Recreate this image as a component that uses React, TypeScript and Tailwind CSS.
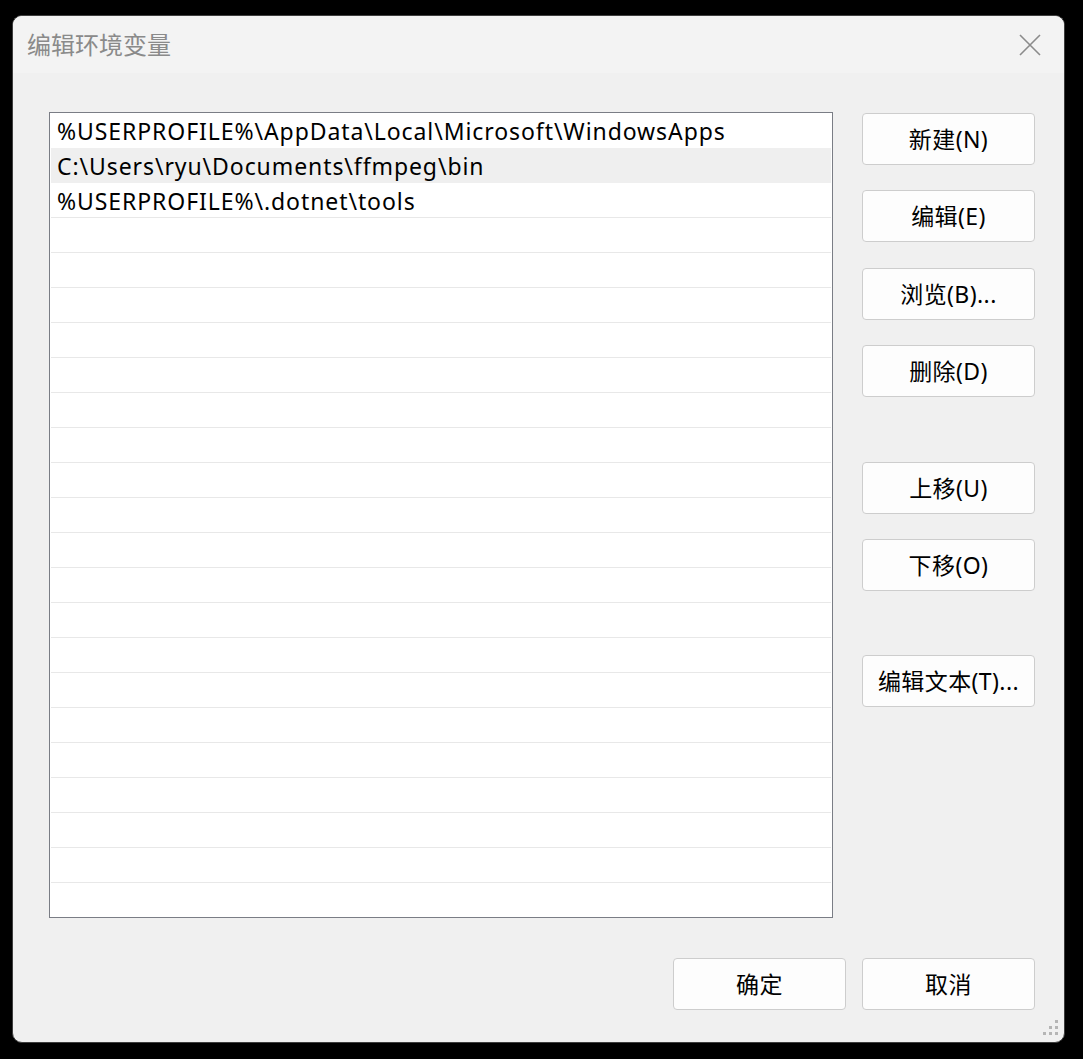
import React from 'react';

const paths = [
  '%USERPROFILE%\\AppData\\Local\\Microsoft\\WindowsApps',
  'C:\\Users\\ryu\\Documents\\ffmpeg\\bin',
  '%USERPROFILE%\\.dotnet\\tools',
];

const ROWS = 23;

function Btn({ label, className = '' }: { label: string; className?: string }) {
  return (
    <button
      className={`h-[52px] w-[173px] rounded-[4px] border border-[#cdcdcd] bg-[#fdfdfd] text-[23px] tracking-[0.4px] text-black ${className}`}
    >
      {label}
    </button>
  );
}

export default function App() {
  const rows = Array.from({ length: ROWS }, (_, i) => paths[i] ?? '');

  return (
    <div
      className="h-[1059px] w-[1083px] bg-black pl-[12px] pt-[15px]"
      style={{ fontFamily: '"Noto Sans", "Noto Sans CJK SC", sans-serif' }}
    >
      <div className="relative flex h-[1028px] w-[1053px] flex-col overflow-hidden rounded-[10px] border border-[#3e3e3e] bg-[#f0f0f0]">
        {/* title bar */}
        <div className="flex h-[57px] items-center justify-between bg-[#f3f3f3] pl-[14px] pr-[23px]">
          <span className="text-[24px] text-[#8a8a8a]">编辑环境变量</span>
          <svg width="22" height="22" viewBox="0 0 22 22" className="mt-[1px]">
            <path d="M1 1 L21 21 M21 1 L1 21" stroke="#8b8b8b" strokeWidth="1.6" fill="none" />
          </svg>
        </div>

        {/* body */}
        <div className="flex flex-1 flex-col pl-[36px] pr-[28px] pt-[39px]">
          <div className="flex gap-[29px]">
            <div className="h-[806px] w-[784px] overflow-hidden border border-[#7a7d85] bg-white px-[1px]">
              {rows.map((p, i) => (
                <div
                  key={i}
                  className={`flex h-[35px] items-center border-b border-[#e8e8e8] pl-[6px] pt-[3px] text-[23px] leading-none tracking-[0.92px] text-black ${
                    i === 1 ? 'bg-[#efefef] border-[#efefef]' : ''
                  } ${i === 0 ? 'border-white' : ''}`}
                >
                  {p}
                </div>
              ))}
            </div>

            <div className="mt-[1px] flex flex-col">
              <Btn label="新建(N)" />
              <Btn label="编辑(E)" className="mt-[25px]" />
              <Btn label="浏览(B)..." className="mt-[26px]" />
              <Btn label="删除(D)" className="mt-[25px]" />
              <Btn label="上移(U)" className="mt-[65px]" />
              <Btn label="下移(O)" className="mt-[25px]" />
              <Btn label="编辑文本(T)..." className="mt-[64px]" />
            </div>
          </div>

          <div className="mr-[1px] mt-[40px] flex justify-end gap-[16px]">
            <Btn label="确定" />
            <Btn label="取消" />
          </div>
        </div>

        {/* resize grip */}
        <svg width="16" height="16" viewBox="0 0 16 16" className="absolute bottom-[6px] right-[5px]">
          <g fill="#b5b5b5">
            <rect x="12" y="0" width="3" height="3" />
            <rect x="6" y="6" width="3" height="3" />
            <rect x="12" y="6" width="3" height="3" />
            <rect x="0" y="12" width="3" height="3" />
            <rect x="6" y="12" width="3" height="3" />
            <rect x="12" y="12" width="3" height="3" />
          </g>
        </svg>
      </div>
    </div>
  );
}
